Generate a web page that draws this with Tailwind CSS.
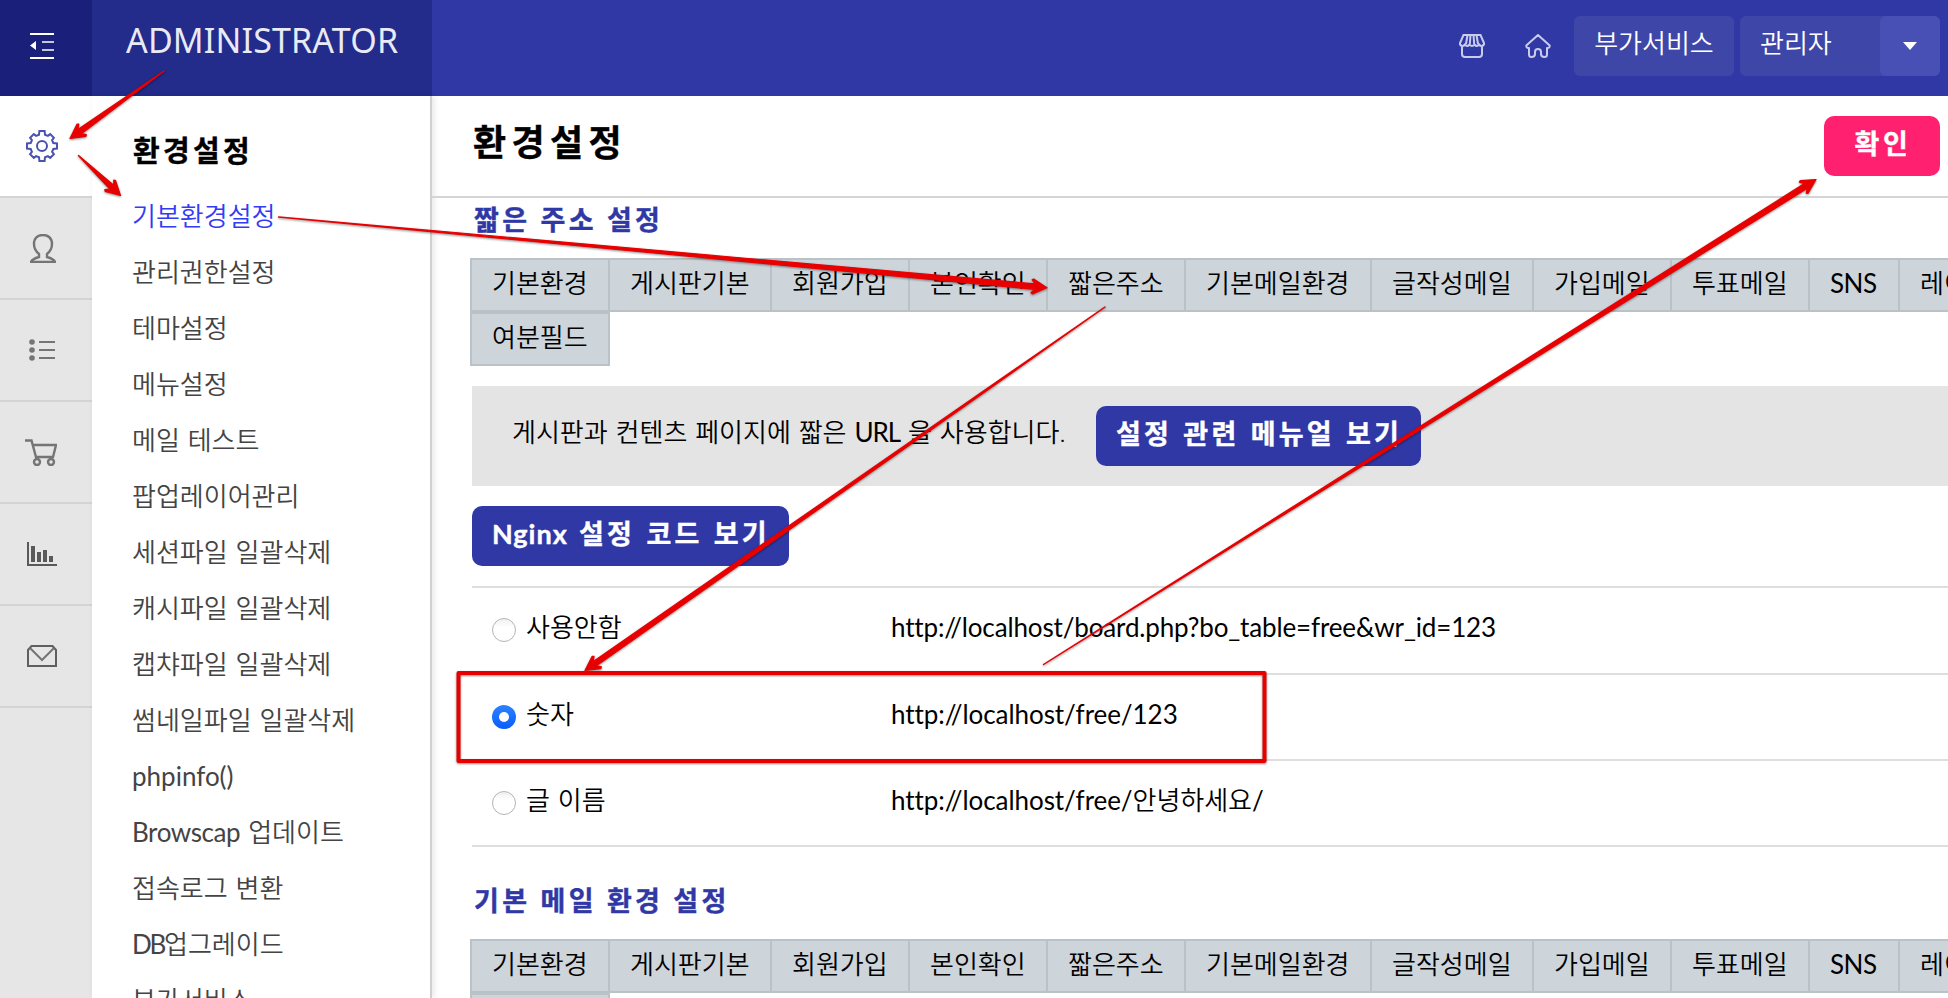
<!DOCTYPE html>
<html lang="ko">
<head>
<meta charset="utf-8">
<title>환경설정</title>
<script src="https://cdn.jsdelivr.net/npm/@tailwindcss/browser@4"></script>
</head>
<body class="relative h-[998px] w-[1948px] overflow-hidden bg-white font-['Lato','Noto_Sans_CJK_KR',sans-serif] text-[26px] font-[350] text-black [word-spacing:0.8px]">

<header class="flex h-24 bg-[#3038a6] text-white">
  <div class="flex w-[92px] items-center justify-center bg-[#1a2079] pr-2 pb-1">
    <svg class="h-[26px] w-6" viewBox="0 0 24 26" fill="#fff"><path d="M0 0h24v2H0zM0 24h24v2H0zM6 8v9L0 12.5z"/><path d="M12 8h12v2H12zM12 16h12v2H12z" opacity=".75"/></svg>
  </div>
  <div class="w-[340px] bg-[#232b8b] pl-[34px] font-['Noto_Sans'] text-[34px] leading-[81px] font-normal tracking-[0.150px] text-[#e9eaf5]">ADMINISTRATOR</div>
  <div class="flex flex-1 items-start justify-end pt-4 pr-2">
    <svg class="mt-[18px] mr-10 h-6 w-[26px]" viewBox="0 0 26 24" fill="none" stroke="#c9cbea" stroke-width="2"><path d="M4.500 1h17L25 9v1.500q-2.500 3-5 0-2 3-4.600 0-2.400 3-4.800 0-2.600 3-4.600 0-2.500 3-5 0V9zM8.500 1 7 10M11.500 1l-.7 9M14.500 1l.7 9M17.500 1 19 10M3 12v8q0 3 3 3h14q3 0 3-3v-8"/></svg>
    <svg class="mt-[18px] mr-[23px] h-6 w-[26px]" viewBox="0 0 26 24" fill="none" stroke="#c9cbea" stroke-width="2" stroke-linejoin="round"><path d="M13 1 1.300 11.500q0 3 2.700 2.500v6.500q0 2.500 2.500 2.500 3.500 0 3.500-3v-2q0-3 3-3t3 3v2q0 3 3.500 3 2.500 0 2.500-2.500V14q2.700.5 2.700-2.500z"/></svg>
    <div class="mr-1.5 h-[60px] w-40 rounded-md bg-[#3e47a8] text-center leading-[54px]">부가서비스</div>
    <div class="flex h-[60px] w-[200px] rounded-md bg-[#3e47a8]">
      <div class="w-[140px] pl-5 leading-[54px]">관리자</div>
      <div class="flex w-[60px] items-center justify-center rounded-md bg-[#4850b5]">
        <svg class="h-2 w-3.5" viewBox="0 0 14 8" fill="#fff"><path d="M0 0h14L7 8z"/></svg>
      </div>
    </div>
  </div>
</header>

<div class="flex h-[902px]">
  <nav class="w-[92px] bg-[#e6e6e6] text-[#757575] *:flex *:h-[102px] *:items-center *:justify-center *:border-b-2 *:border-[#d4d4d4] *:pr-2">
    <div class="bg-white"><svg class="size-8 text-[#4a52b0]" viewBox="0 0 32 32" fill="none" stroke="currentColor" stroke-width="2"><path d="M13 4.700 13.400 1h5.200L19 4.700l2.900 1.200 2.300-1.800 3.700 3.700-1.800 2.300L27.300 13l3.700.4v5.200l-3.700.4-1.200 2.900 1.800 2.300-3.700 3.700-2.300-1.800-2.900 1.200-.4 3.700h-5.200l-.4-3.700-2.900-1.200-2.300 1.800-3.700-3.700 1.800-2.300L4.700 19 1 18.600v-5.200l3.700-.4 1.200-2.900-1.800-2.300 3.700-3.700 2.300 1.800z"/><circle cx="16" cy="16" r="5"/></svg></div>
    <div><svg class="ml-0.5 h-[29px] w-[26px]" viewBox="0 0 26 29" fill="none" stroke="currentColor" stroke-width="2.400"><path d="M1 28h24q-1-3-8-5v-3c3-2.500 5-6 5-10 0-6-4-9-9-9s-9 3-9 9c0 4 2 7.500 5 10v3q-7 2-8 5z"/></svg></div>
    <div><svg class="h-[22px] w-[26px]" viewBox="0 0 26 22" fill="currentColor"><circle cx="3" cy="3" r="2.800"/><circle cx="3" cy="11" r="2.800"/><circle cx="3" cy="19" r="2.800"/><path d="M10 2h16v2H10zM10 10h16v2H10zM10 18h16v2H10z"/></svg></div>
    <div><svg class="-ml-0.5 h-[27px] w-8" viewBox="0 0 32 27" fill="none" stroke="currentColor" stroke-width="2.400"><path d="M0 1.500h6.500L11 18h17l3-12H8"/><circle cx="12" cy="23" r="3"/><circle cx="26" cy="23" r="3"/></svg></div>
    <div><svg class="h-6 w-[30px]" viewBox="0 0 30 24" fill="#595959"><path d="M0 0h2v22h28v2H0zM4 4h4v16H4zM10 10h4v10h-4zM16 8h4v12h-4zM22 14h4v6h-4z"/></svg></div>
    <div><svg class="h-[22px] w-[30px]" viewBox="0 0 30 22" fill="none" stroke="currentColor" stroke-width="2"><path d="M4.500 1h21L29 5v16H1V5z" stroke="#5f5f5f"/><path d="m3 3 12 12L27 3"/></svg></div>
  </nav>

  <aside class="w-[340px] border-r-2 border-[#d0d0d0] pl-10 text-[#444] shadow-[2px_0_6px_rgba(0,0,0,0.1)]">
    <h2 class="h-[93px] pl-px text-[29px] leading-[109px] font-bold tracking-[3.3px] text-black [-webkit-text-stroke:0.4px]">환경설정</h2>
    <ul class="leading-[55px] whitespace-nowrap *:h-14">
      <li class="text-[#333cf5]">기본환경설정</li>
      <li>관리권한설정</li>
      <li>테마설정</li>
      <li>메뉴설정</li>
      <li>메일 테스트</li>
      <li>팝업레이어관리</li>
      <li>세션파일 일괄삭제</li>
      <li>캐시파일 일괄삭제</li>
      <li>캡챠파일 일괄삭제</li>
      <li>썸네일파일 일괄삭제</li>
      <li class="font-normal">phpinfo()</li>
      <li><span class="font-normal tracking-[-0.4px]">Browscap</span> 업데이트</li>
      <li>접속로그 변환</li>
      <li><span class="font-normal tracking-[-2.300px]">DB</span>업그레이드</li>
      <li>부가서비스</li>
    </ul>
  </aside>

  <main class="w-[1516px] overflow-hidden">
    <div class="flex h-[102px] items-start justify-between border-b-2 border-[#d5d5d5] pr-2 pl-[41px]">
      <h1 class="text-[36px] leading-[93px] font-bold tracking-[5.400px] [-webkit-text-stroke:0.4px]">환경설정</h1>
      <button class="mt-5 h-[60px] w-[116px] rounded-[10px] bg-[#ff216f] pl-0.5 text-[27px] leading-[56px] font-bold tracking-[3.600px] text-white [-webkit-text-stroke:0.4px]"><span class="block h-[58px] leading-[54px]">확인</span></button>
    </div>

    <section class="pl-10">
      <h2 class="h-[60px] pl-0.5 text-[27px] leading-[44px] font-bold tracking-[3.400px] text-[#2f38a5] [-webkit-text-stroke:0.4px] [word-spacing:0px]">짧은 주소 설정</h2>
      <div class="-ml-0.5 flex leading-[46px] whitespace-nowrap *:-mr-0.5 *:h-[54px] *:shrink-0 *:border-2 *:border-[#b9c2c6] *:bg-[#cdd4da] *:px-5">
        <div class="w-[140px]">기본환경</div><div class="w-[164px]">게시판기본</div><div class="w-[140px]">회원가입</div><div class="w-[140px]">본인확인</div><div class="w-[140px]">짧은주소</div><div class="w-[188px]">기본메일환경</div><div class="w-[164px]">글작성메일</div><div class="w-[140px]">가입메일</div><div class="w-[140px]">투표메일</div><div class="w-[92px] font-normal tracking-[-0.500px]">SNS</div><div class="w-[240px]">레이아웃 추가설정</div>
      </div>
      <div class="-ml-0.5 h-[54px] w-[140px] border-2 border-[#b9c2c6] bg-[#cdd4da] px-5 leading-[46px]">여분필드</div>

      <div class="mt-5 flex h-[100px] items-center bg-[#e4e4e4] pl-10">
        <p class="w-[584px] pb-2 leading-[40px] whitespace-nowrap">게시판과 컨텐츠 페이지에 짧은 <span class="font-normal tracking-[-1px]">URL</span> 을 사용합니다.</p>
        <div class="h-[60px] w-[325px] rounded-[10px] bg-[#2f38a5] pl-5 text-[27px] leading-[56px] font-bold tracking-[3.200px] whitespace-nowrap text-white [-webkit-text-stroke:0.4px] [word-spacing:1.500px]">설정 관련 메뉴얼 보기</div>
      </div>
      <div class="mt-5 h-[60px] w-[317px] rounded-[10px] bg-[#2f38a5] pl-5 text-[27px] leading-[56px] font-bold tracking-[3.200px] whitespace-nowrap text-white [-webkit-text-stroke:0.4px] [word-spacing:1.500px]"><span class="tracking-[1px]">Nginx</span> 설정 코드 보기</div>

      <div class="mt-5 border-t-2 border-[#dedede] leading-[40px] *:flex *:items-center *:border-b-2 *:border-[#dedede] *:pl-5">
        <div class="h-[87px] pb-0.5"><span class="size-6 rounded-full border border-[#b5b5b5] bg-linear-to-b from-[#f1f1f1] to-white to-40%"></span><span class="w-[375px] pb-1.5 pl-2.5">사용안함</span><span class="pb-1.5 font-normal tracking-[-0.140px]">http://localhost/board.php?bo_table=free&amp;wr_id=123</span></div>
        <div class="h-[86px]"><span class="flex size-6 items-center justify-center rounded-full bg-linear-to-b from-[#2b83ff] to-[#0a5cfb]"><span class="size-2.5 rounded-full bg-white"></span></span><span class="w-[375px] pb-1.5 pl-2.5">숫자</span><span class="pb-1.5 font-normal tracking-[-0.050px]">http://localhost/free/123</span></div>
        <div class="h-[86px]"><span class="size-6 rounded-full border border-[#b5b5b5] bg-linear-to-b from-[#f1f1f1] to-white to-40%"></span><span class="w-[375px] pb-1.5 pl-2.5">글 이름</span><span class="pb-1.5 font-normal tracking-[-0.050px]">http://localhost/free/<span class="font-[350]">안녕하세요</span>/</span></div>
      </div>
    </section>

    <section class="mt-8 pl-10">
      <h2 class="h-[60px] pl-0.5 text-[27px] leading-[44px] font-bold tracking-[3.400px] text-[#2f38a5] [-webkit-text-stroke:0.4px] [word-spacing:0px]">기본 메일 환경 설정</h2>
      <div class="-ml-0.5 flex leading-[46px] whitespace-nowrap *:-mr-0.5 *:h-[54px] *:shrink-0 *:border-2 *:border-[#b9c2c6] *:bg-[#cdd4da] *:px-5">
        <div class="w-[140px]">기본환경</div><div class="w-[164px]">게시판기본</div><div class="w-[140px]">회원가입</div><div class="w-[140px]">본인확인</div><div class="w-[140px]">짧은주소</div><div class="w-[188px]">기본메일환경</div><div class="w-[164px]">글작성메일</div><div class="w-[140px]">가입메일</div><div class="w-[140px]">투표메일</div><div class="w-[92px] font-normal tracking-[-0.500px]">SNS</div><div class="w-[240px]">레이아웃 추가설정</div>
      </div>
      <div class="-ml-0.5 h-[54px] w-[140px] border-2 border-[#b9c2c6] bg-[#cdd4da] px-5 leading-[46px]">여분필드</div>
    </section>
  </main>
</div>

<!-- Guide annotations drawn over the page -->
<svg class="pointer-events-none absolute inset-0 h-[998px] w-[1948px] drop-shadow-[0_1px_1px_rgba(0,0,0,0.45)]" viewBox="0 0 1948 998">
  <rect x="458.500" y="673" width="806" height="88" fill="none" stroke="#e80000" stroke-width="4" stroke-linejoin="round"/>
  <g id="arrows" fill="#e80000" stroke="#e80000" stroke-width="1.200" stroke-linejoin="round"></g>
</svg>
<script>
  // Each arrow: tail x, tail y, tip x, tip y. The shaft widens towards the head.
  const arrows = [
    [164, 71, 70, 138.500],
    [78.500, 155.500, 120.500, 195.500],
    [278.500, 217, 1047, 287.700],
    [1105, 307, 585, 670.500],
    [1043.500, 664.500, 1816, 179.500],
  ];
  const group = document.getElementById('arrows');
  for (const [x1, y1, x2, y2] of arrows) {
    const len = Math.hypot(x2 - x1, y2 - y1);
    const ux = (x2 - x1) / len, uy = (y2 - y1) / len;
    const at = (back, side) => [x2 - ux * back - uy * side, y2 - uy * back + ux * side].map(v => v.toFixed(1)).join(',');
    const pts = [at(len, 0.1), at(12, 2.700), at(15.500, 6.500), at(14, 7.500), at(0, 0), at(14, -7.500), at(15.500, -6.500), at(12, -2.700), at(len, -0.1)];
    const p = document.createElementNS('http://www.w3.org/2000/svg', 'polygon');
    p.setAttribute('points', pts.join(' '));
    group.append(p);
  }
</script>
</body>
</html>
